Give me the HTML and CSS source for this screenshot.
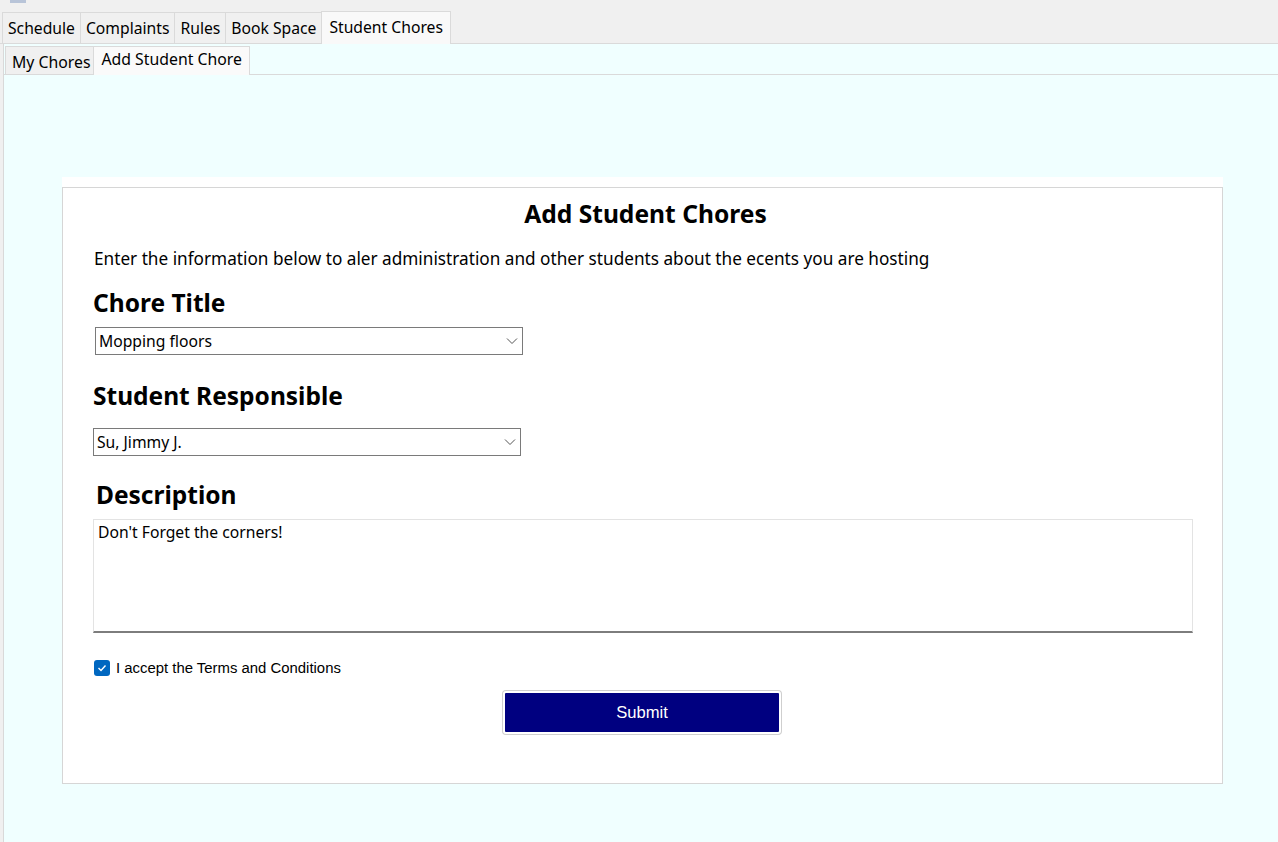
FILE: index.html
```html
<!DOCTYPE html>
<html lang="en">
<head>
<meta charset="utf-8">
<title>Student Chores</title>
<link rel="stylesheet" href="styles.css">
</head>
<body>
<div class="titlebar"><span class="appicon"></span></div>
<nav class="tabs">
  <span class="tab">Schedule</span>
  <span class="tab">Complaints</span>
  <span class="tab">Rules</span>
  <span class="tab">Book Space</span>
  <span class="tab active">Student Chores</span>
</nav>
<section class="panel">
  <nav class="subtabs">
    <span class="subtab">My Chores</span>
    <span class="subtab active">Add Student Chore</span>
  </nav>
  <div class="subpanel">
    <div class="card">
      <div class="card-inner">
        <h1 class="title">Add Student Chores</h1>
        <p class="intro">Enter the information below to aler administration and other students about the ecents you are hosting</p>
        <h2 class="label l1">Chore Title</h2>
        <div class="select s1"><span>Mopping floors</span><svg width="12" height="8" viewBox="0 0 12 8"><path d="M1 1.5 L6 6.5 L11 1.5" fill="none" stroke="#555" stroke-width="1"/></svg></div>
        <h2 class="label l2">Student Responsible</h2>
        <div class="select s2"><span>Su, Jimmy J.</span><svg width="12" height="8" viewBox="0 0 12 8"><path d="M1 1.5 L6 6.5 L11 1.5" fill="none" stroke="#555" stroke-width="1"/></svg></div>
        <h2 class="label l3">Description</h2>
        <div class="textarea">Don't Forget the corners!</div>
        <label class="check"><span class="box"><svg width="10" height="8" viewBox="0 0 10 8"><path d="M1.5 4 L4 6.5 L8.5 1.5" fill="none" stroke="#fff" stroke-width="1.4"/></svg></span>I accept the Terms and Conditions</label>
        <div class="submit-row"><button class="submit">Submit</button></div>
      </div>
    </div>
  </div>
</section>
</body>
</html>
```

FILE: styles.css
```css
* { box-sizing: border-box; }
html, body { margin: 0; padding: 0; }
body {
  width: 1278px;
  height: 842px;
  overflow: hidden;
  background: #f0f0f0;
  font-family: "Noto Sans", "Open Sans", sans-serif;
  color: #000;
}
.titlebar { height: 12px; position: relative; }
.appicon {
  display: block; margin-left: 10px; width: 16px; height: 3px;
  background: #b8c4d8;
}
.tabs {
  display: flex;
  align-items: flex-end;
  height: 32px;
  padding-left: 2px;
  border-bottom: 1px solid #dadada;
}
.tab {
  height: 31px;
  padding: 0 5px;
  font-size: 15.7px;
  line-height: 31px;
  background: #f0f0f0;
  border: 1px solid #dadada;
  border-bottom: none;
  margin-right: -1px;
}
.tab.active {
  height: 33px;
  line-height: 30px;
  padding: 0 7px;
  background: #f9f9f9;
  margin-bottom: -1px;
}
.panel {
  margin-left: 3px;
  border-left: 1px solid #d9d9d9;
  background: #f0ffff;
  height: 798px;
}
.subtabs {
  display: flex;
  align-items: flex-end;
  height: 31px;
  padding-left: 1px;
  border-bottom: 1px solid #dadada;
}
.subtab {
  height: 28px;
  padding: 0 3px 0 6px;
  font-size: 15.8px;
  line-height: 30px;
  background: #f0f0f0;
  border: 1px solid #dadada;
  border-bottom: none;
  margin-right: -1px;
}
.subtab.active {
  height: 29px;
  line-height: 25px;
  padding: 0 7px;
  background: #fafafa;
  margin-bottom: -1px;
}
.subpanel {
  padding: 102px 0 0 58px;
}
.card {
  width: 1161px;
  background: #fff;
  padding-top: 10px;
}
.card-inner {
  border: 1px solid #d6d6d6;
  height: 597px;
  padding: 0 28px 0 30px;
}
.title {
  margin: 11px 0 0;
  text-align: center;
  font-size: 24.6px;
  font-weight: 700;
  line-height: 30px;
  padding-left: 4px;
}
.intro {
  margin: 18px 0 0 1px;
  font-size: 17.2px;
  line-height: 24px;
}
.label {
  margin: 0;
  font-size: 24.5px;
  font-weight: 700;
  line-height: 32px;
}
.l1 { margin-top: 16px; }
.l2 { margin-top: 25px; }
.l3 { margin-top: 23px; margin-left: 3px; }
.select {
  width: 428px;
  height: 28px;
  border: 1px solid #7a7a7a;
  background: #fff;
  display: flex;
  align-items: center;
  justify-content: space-between;
  padding: 0 4px 0 3px;
  font-size: 15.7px;
}
.s1 { margin-top: 8px; margin-left: 2px; }
.s2 { margin-top: 16px; }
.textarea {
  margin-top: 8px;
  width: 1100px;
  height: 114px;
  border: 1px solid #e3e3e3;
  border-bottom: 2px solid #7d7d7d;
  padding: 0 4px;
  font-size: 15.7px;
  line-height: 24px;
}
.check {
  display: flex;
  align-items: center;
  margin-top: 27px;
  margin-left: 1px;
  font-family: "Liberation Sans", Arial, sans-serif;
  font-size: 14.9px;
  gap: 6px;
}
.box {
  width: 16px; height: 16px;
  border-radius: 3px;
  background: #0067c0;
  display: flex; align-items: center; justify-content: center;
}
.submit-row {
  display: flex;
  justify-content: center;
  margin-top: 15px;
}
.submit {
  width: 278px;
  height: 43px;
  margin-left: -3px;
  background: #000080;
  color: #fff;
  border: 2px solid #fff;
  border-radius: 3px;
  box-shadow: 0 0 0 1px #cfcfcf;
  font-family: "Liberation Sans", Arial, sans-serif;
  font-size: 16.6px;
  padding: 0;
}
```
